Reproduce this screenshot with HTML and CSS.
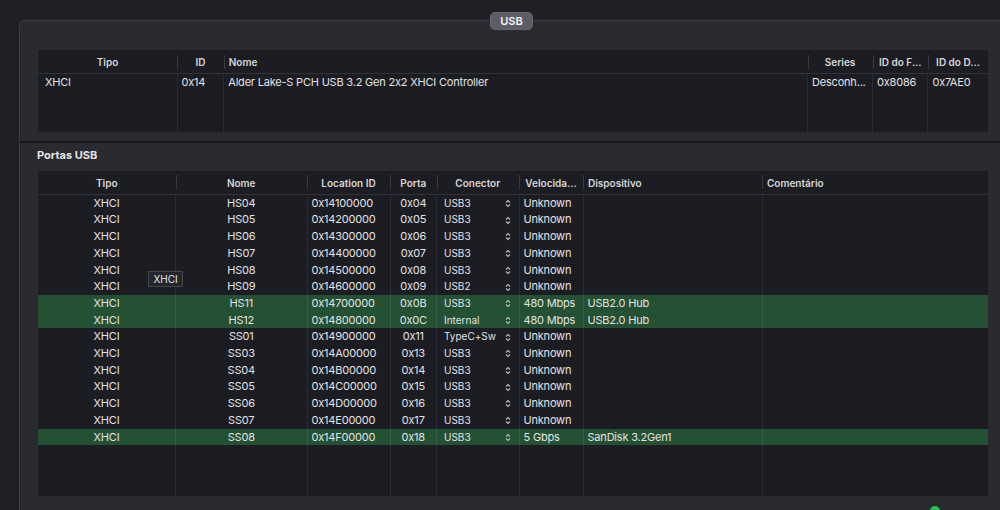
FILE: index.html
```html
<!DOCTYPE html>
<html lang="pt">
<head>
    <meta charset="UTF-8">
    <meta name="viewport" content="width=device-width, initial-scale=1.0">
    <title>USB</title>
    <link rel="stylesheet" href="styles.css">
</head>
<body>
    <div class="window">
        <section class="group">
            <span class="group-tab">USB</span>
            <table class="grid controllers">
                <colgroup>
                    <col style="width:139px">
                    <col style="width:46.7px">
                    <col style="width:583.6px">
                    <col style="width:65px">
                    <col style="width:55.4px">
                    <col style="width:60px">
                </colgroup>
                <thead>
                    <tr>
                        <th>Tipo</th>
                        <th>ID</th>
                        <th class="left">Nome</th>
                        <th>Series</th>
                        <th>ID do F...</th>
                        <th>ID do D...</th>
                    </tr>
                </thead>
                <tbody>
                    <tr>
                        <td class="left pad-l">XHCI</td>
                        <td class="left">0x14</td>
                        <td class="left">Alder Lake-S PCH USB 3.2 Gen 2x2 XHCI Controller</td>
                        <td class="left">Desconh...</td>
                        <td class="left">0x8086</td>
                        <td class="left">0x7AE0</td>
                    </tr>
                    <tr class="filler">
                        <td></td><td></td><td></td><td></td><td></td><td></td>
                    </tr>
                </tbody>
            </table>
        </section>

        <section class="ports">
            <h2>Portas USB</h2>
            <table class="grid">
                <colgroup>
                    <col style="width:137.5px">
                    <col style="width:131.5px">
                    <col style="width:83px">
                    <col style="width:46.5px">
                    <col style="width:82.5px">
                    <col style="width:64px">
                    <col style="width:179px">
                    <col style="width:226px">
                </colgroup>
                <thead>
                    <tr>
                        <th>Tipo</th>
                        <th>Nome</th>
                        <th>Location ID</th>
                        <th>Porta</th>
                        <th>Conector</th>
                        <th>Velocida...</th>
                        <th class="left">Dispositivo</th>
                        <th class="left">Comentário</th>
                    </tr>
                </thead>
                <tbody id="ports"></tbody>
            </table>
            <div class="status"><span class="dot"></span></div>
        </section>

        <div class="tooltip">XHCI</div>
    </div>

    <script>
        const ports = [
            ['HS04', '0x14100000', '0x04', 'USB3', 'Unknown', '', false],
            ['HS05', '0x14200000', '0x05', 'USB3', 'Unknown', '', false],
            ['HS06', '0x14300000', '0x06', 'USB3', 'Unknown', '', false],
            ['HS07', '0x14400000', '0x07', 'USB3', 'Unknown', '', false],
            ['HS08', '0x14500000', '0x08', 'USB3', 'Unknown', '', false],
            ['HS09', '0x14600000', '0x09', 'USB2', 'Unknown', '', false],
            ['HS11', '0x14700000', '0x0B', 'USB3', '480 Mbps', 'USB2.0 Hub', true],
            ['HS12', '0x14800000', '0x0C', 'Internal', '480 Mbps', 'USB2.0 Hub', true],
            ['SS01', '0x14900000', '0x11', 'TypeC+Sw', 'Unknown', '', false],
            ['SS03', '0x14A00000', '0x13', 'USB3', 'Unknown', '', false],
            ['SS04', '0x14B00000', '0x14', 'USB3', 'Unknown', '', false],
            ['SS05', '0x14C00000', '0x15', 'USB3', 'Unknown', '', false],
            ['SS06', '0x14D00000', '0x16', 'USB3', 'Unknown', '', false],
            ['SS07', '0x14E00000', '0x17', 'USB3', 'Unknown', '', false],
            ['SS08', '0x14F00000', '0x18', 'USB3', '5 Gbps', 'SanDisk 3.2Gen1', true]
        ];

        const chevron = '<svg class="updown" viewBox="0 0 6 9"><path d="M1 3.5L3 1.5L5 3.5M1 5.5L3 7.5L5 5.5"/></svg>';

        const body = document.getElementById('ports');
        let html = '';
        ports.forEach(([name, loc, port, conn, speed, device, active]) => {
            html += `<tr class="${active ? 'active' : ''}">
                <td>XHCI</td>
                <td>${name}</td>
                <td class="left">${loc}</td>
                <td>${port}</td>
                <td class="conn"><div class="select"><span>${conn}</span>${chevron}</div></td>
                <td class="left">${speed}</td>
                <td class="left">${device}</td>
                <td></td>
            </tr>`;
        });
        // linha vazia que preenche o resto da tabela
        html += '<tr class="filler"><td></td><td></td><td></td><td></td><td></td><td></td><td></td><td></td></tr>';
        body.innerHTML = html;
    </script>
</body>
</html>
```

FILE: styles.css
```css
body {
    margin: 0;
    background: #1f2026;
    font-family: Inter, "Liberation Sans", sans-serif;
    font-feature-settings: "calt" 0;
    color: #e2e2e4;
    overflow: hidden;
}
.window {
    position: relative;
    height: 510px;
    padding: 20px 0 0 19px;
    box-sizing: border-box;
}
.group {
    position: relative;
    background: #2a2b31;
    border-top: 1px solid #3b3c42;
    border-left: 1px solid #3b3c42;
    border-bottom: 2px solid #17181c;
    border-radius: 5px 0 0 0;
    padding: 29px 12px 9px 18px;
}
.group-tab {
    position: absolute;
    top: -9px;
    left: 470px;
    width: 43px;
    height: 18px;
    box-sizing: border-box;
    border-radius: 5px;
    background: #5d5e65;
    border: 1px solid #67686e;
    color: #f2f2f3;
    font-size: 11px;
    font-weight: 600;
    line-height: 16px;
    text-align: center;
}
.ports {
    background: #2a2b31;
    border-left: 1px solid #3b3c42;
    padding: 5px 12px 0 18px;
    height: 367px;
}
.ports h2 {
    margin: 0 0 9px -1px;
    padding-top: 1px;
    font-size: 11px;
    font-weight: 700;
    line-height: 13px;
    color: #e4e4e6;
}
.grid {
    width: 950px;
    table-layout: fixed;
    border-collapse: collapse;
    background: #1c1d23;
    font-size: 11px;
}
.grid th {
    height: 22px;
    padding: 1px 4px 0;
    border-bottom: 1px solid #31323a;
    font-size: 10px;
    font-weight: 600;
    color: #d6d6d8;
    text-align: center;
    white-space: nowrap;
    overflow: hidden;
    background: linear-gradient(#3a3b42, #3a3b42) left center / 1px 14px no-repeat;
}
.grid th:first-child {
    background: none;
}
.grid td {
    height: 15.7px;
    padding: 1px 4px 0;
    line-height: 15.7px;
    letter-spacing: -0.2px;
    text-align: center;
    white-space: nowrap;
    overflow: hidden;
    border-left: 1px solid #2b2c33;
}
.grid td:first-child {
    border-left: none;
}
.grid .left {
    text-align: left;
}
.grid th.left {
    padding-left: 5px;
}
.grid .pad-l {
    padding-left: 7px;
}
.grid tr.active td {
    background: #245133;
    border-left-color: #37604a;
}
.grid tr.filler td {
    height: 51px;
    padding: 0;
}
.controllers tr.filler td {
    height: 41px;
}
.grid td.conn {
    padding: 1px 8px 0 7px;
}
.select {
    display: flex;
    align-items: center;
    justify-content: space-between;
    font-size: 10px;
    letter-spacing: 0;
}
.updown {
    width: 6px;
    height: 9px;
    fill: none;
    stroke: #b9b9bd;
    stroke-width: 1.1;
}
.status {
    display: flex;
    justify-content: flex-end;
    padding: 10px 48px 0 0;
}
.dot {
    width: 10px;
    height: 10px;
    border-radius: 50%;
    background: #2fc14f;
}
.tooltip {
    position: absolute;
    left: 148px;
    top: 271px;
    width: 35px;
    height: 16px;
    box-sizing: border-box;
    background: #25262b;
    border: 1px solid #45464c;
    font-size: 10px;
    line-height: 14px;
    text-align: center;
    color: #e4e4e6;
}
```
